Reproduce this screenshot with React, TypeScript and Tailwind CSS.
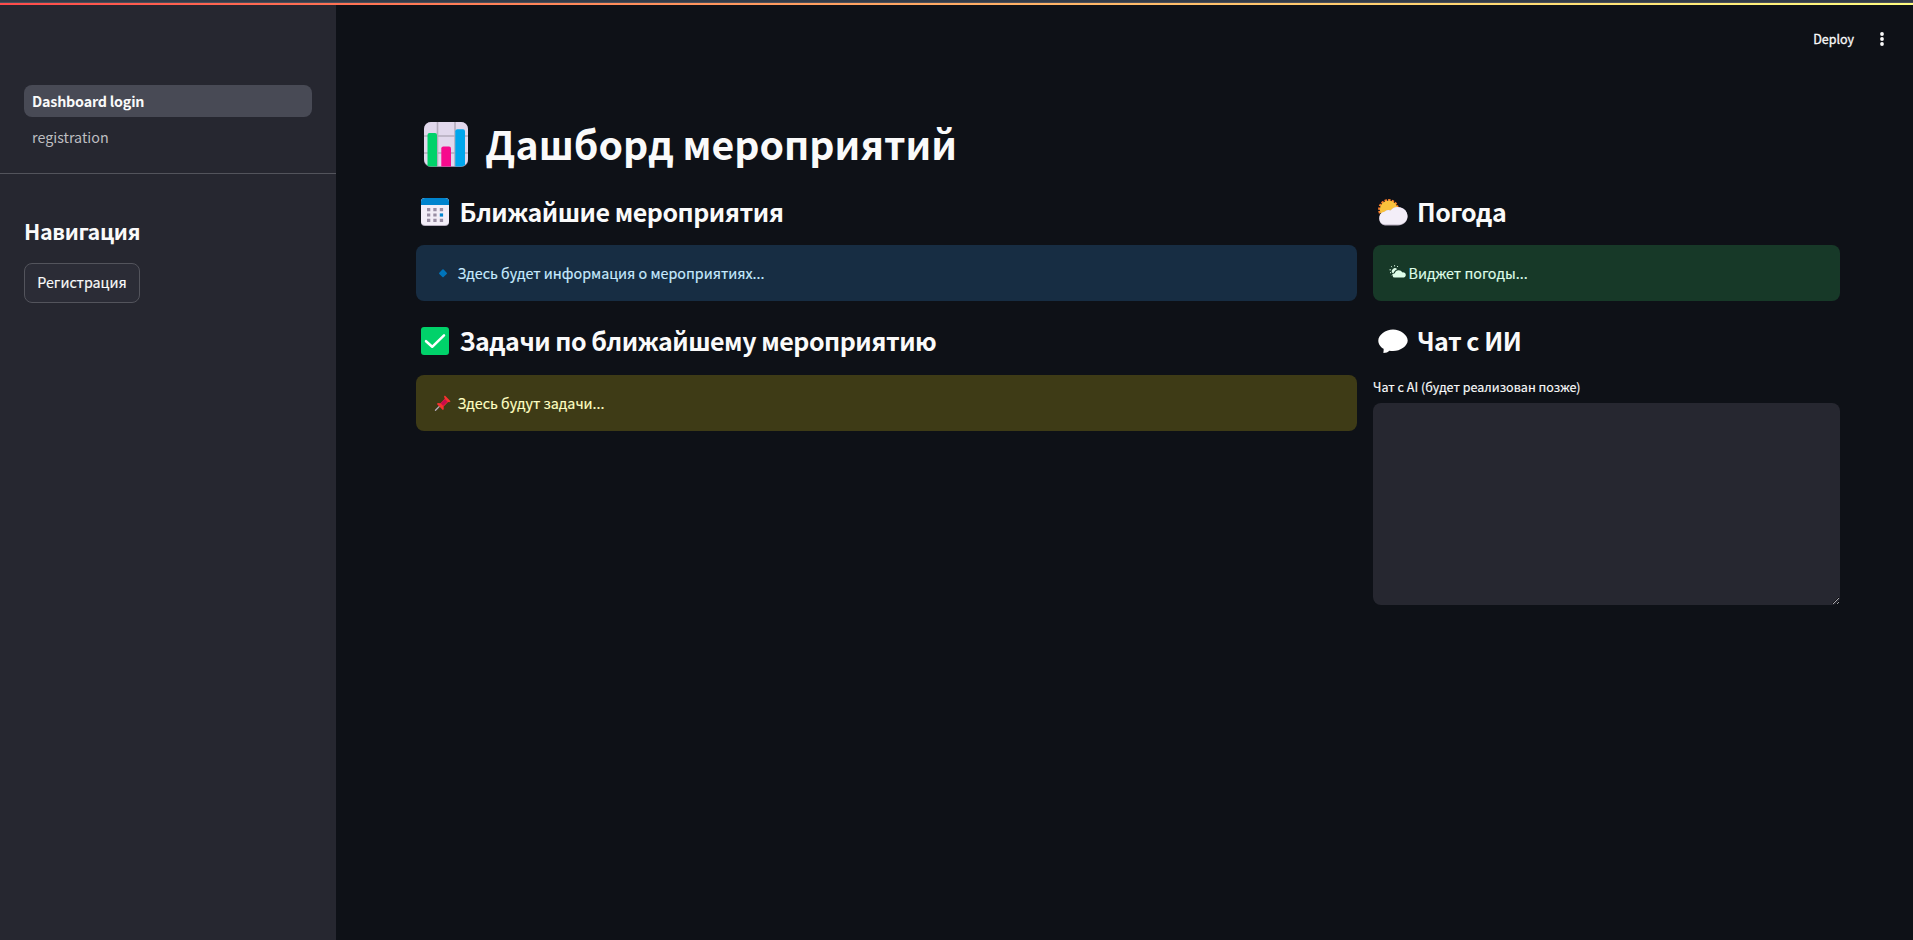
import type { ReactNode } from "react";

const ChartIcon = () => (
  <svg className="mt-[2px] ml-[8px] mr-[17.5px] h-[45px] w-[44px] shrink-0" viewBox="0 0 44 45">
    <rect width="44" height="45" rx="7" fill="#998ea4" />
    <rect width="44" height="44" rx="7" fill="#e1d8ec" />
    <path d="M13.5 0v44M31 0v44M0 14h44M0 31h44" stroke="#b4acbc" strokeWidth="1.6" />
    <path d="M3.5 44V13a2 2 0 0 1 2-2h5.5a2 2 0 0 1 2 2v31.5h-6z" fill="#00d26a" />
    <path d="M17.3 44.5V26.500a2 2 0 0 1 2-2h5.700a2 2 0 0 1 2 2v18z" fill="#f70a8d" />
    <path d="M31.3 44.5V9.300a2 2 0 0 1 2-2h5.700a2 2 0 0 1 2 2V43l-3 1.500z" fill="#00a6ed" />
  </svg>
);

const CalendarIcon = () => (
  <svg className="ml-[5px] mr-[10.5px] size-7 shrink-0" viewBox="0 0 28 28">
    <rect width="28" height="28" rx="4" fill="#b4acbc" />
    <rect width="28" height="27" rx="4" fill="#f3eef8" />
    <path d="M0 7V4a4 4 0 0 1 4-4h20a4 4 0 0 1 4 4v3z" fill="#0084ce" />
    <path d="M6 10h3.300v3.200H6zM12.300 10h3.300v3.200h-3.300zM18.800 10h3.300v3.200h-3.300zM6 15.400h3.300v3.200H6zM12.300 15.400h3.300v3.200h-3.300zM6 20.800h3.300V24H6zM12.300 20.800h3.300V24h-3.300zM18.800 20.800h3.300V24h-3.300z" fill="#998ea4" />
    <path d="M18.800 15.400h3.300v3.200h-3.300z" fill="#0084ce" />
  </svg>
);

const CheckIcon = () => (
  <svg className="ml-[5px] mr-[10.5px] size-7 shrink-0" viewBox="0 0 28 28">
    <rect width="28" height="28" rx="3" fill="#00d26a" />
    <path d="M5 14.200l6.200 5.600L23 8.400" fill="none" stroke="#fff" strokeWidth="2.5" strokeLinecap="round" strokeLinejoin="round" />
  </svg>
);

const SunCloudIcon = () => (
  <svg className="ml-[5px] mr-[9px] h-[28px] w-[30px] shrink-0" viewBox="0 0 30 28">
    <circle cx="10.5" cy="11.5" r="9.3" fill="none" stroke="#ff822d" strokeWidth="2.2" strokeDasharray="2.4 1.2" />
    <circle cx="10.7" cy="11.5" r="8.9" fill="#f9c23c" />
    <path d="M7 27.500a7 7 0 0 1-.5-13.700A5.500 5.500 0 0 1 12.500 12.500a9.700 9.700 0 0 1 17 6c0 5.500-4.500 9-9.500 9z" fill="#b4acbc" />
    <path d="M7 26.600a6.500 6.500 0 0 1-.5-12.800A5.500 5.500 0 0 1 12.500 12.500a9.700 9.700 0 0 1 17 5.500c0 5-4.500 8.600-9.500 8.600z" fill="#f3eef8" />
  </svg>
);

const BubbleIcon = () => (
  <svg className="ml-[5px] mr-[9px] h-[28px] w-[30px] shrink-0" viewBox="0 0 30 28">
    <path d="M15 2.500C7.500 2.500.3 8.300.3 13.500c0 4 2.500 6.800 5.300 8.300.2 1.700-.2 3-.2 4.200 2.800 0 4.400-.8 5.900-2.200 1.100.2 2.500.3 3.700.3 7.500 0 14.700-5.400 14.700-10.600S22.500 2.500 15 2.500z" fill="#fff" />
  </svg>
);

const DiamondIcon = () => (
  <svg className="mr-[5.5px] h-4 w-[20px] shrink-0" viewBox="0 0 20 16">
    <path d="M7.300 8.900a.8.800 0 0 1 0-1.200l3.100-3.100a.8.800 0 0 1 1.200 0l3.100 3.100a.8.800 0 0 1 0 1.200l-3.100 3.100a.8.800 0 0 1-1.200 0z" fill="#0074ba" />
  </svg>
);

const PinIcon = () => (
  <svg className="mr-[5.5px] h-4 w-[20px] shrink-0" viewBox="0 0 20 16">
    <path d="M3.500 15.300L9.100 9.600" stroke="#b4acbc" strokeWidth="1.3" strokeLinecap="round" />
    <path d="M12.900.500l5.700 5.700-1.300 1-1.200-.2-4.500 4.500.2 2.700-1 .8L4.900 9.100l.9-1 2.600.2 4.400-4.500-.8-2.200z" fill="#f8312f" />
    <path d="M13 4l2.600 2.800-4.400 4.200L8.600 8.300z" fill="#ca0b4a" />
  </svg>
);

const CloudGlyph = () => (
  <svg className="mr-[2.5px] h-4 w-[17px] shrink-0" viewBox="0 0 17 16" fill="#dffde9">
    <path d="M5.800 12.600a2.200 2.200 0 0 1 0-4.400c.5-2 2-3 3.800-3 1.700 0 3 .8 3.600 2.200 2.100-.3 3.600.9 3.600 2.600s-1.300 2.600-3.300 2.600z" />
    <path d="M3.600 8.200A2.600 2.600 0 1 1 8.200 4.300C6.300 4.900 5.300 6.300 4.900 7.500z" />
    <path d="M5.600.200v1.200M2.200 1.300l.9.900M.500 4.800h1.400M8.900 1.100l-.8.900M1 8l1.200-.7M3 10.400l.6-1" stroke="#dffde9" strokeWidth="1" />
  </svg>
);

const SectionTitle = ({ icon, children }: { icon: ReactNode; children: ReactNode }) => (
  <h3 className="flex h-[65px] items-center pb-[2px] text-[25px] font-bold tracking-[-0.48px] whitespace-nowrap">
    {icon}
    <span>{children}</span>
  </h3>
);

export default function App() {
  return (
    <div className="flex h-[940px] w-[1913px] flex-col overflow-hidden bg-[#0e1117] font-['Noto_Sans_CJK_SC','Noto_Sans',sans-serif] text-[14.3px] text-[#fafafa]">
      <div className="h-[3px] shrink-0 border-b border-[#4a4f5a] bg-[#323b48]" />
      <div className="h-[2px] shrink-0 bg-linear-to-r from-[#ff4b4b] to-[#fffd80]" />
      <div className="flex min-h-0 flex-1">
        <aside className="w-[336px] shrink-0 bg-[#262730]">
          <nav className="flex h-[169px] flex-col gap-1 border-b border-[#53545c] px-6 pt-20">
            <a className="flex h-8 items-center rounded-lg bg-[#484a55] px-2 font-bold tracking-[-0.2px]"><span>Dashboard login</span></a>
            <a className="flex h-8 items-center rounded-lg px-2 text-[#bebec1]"><span>registration</span></a>
          </nav>
          <div className="px-6 pt-[39px]">
            <h2 className="flex h-[36px] items-center text-[21.5px] font-bold tracking-[-0.35px]"><span>Навигация</span></h2>
            <button className="mt-[14px] flex h-10 w-[116px] items-center justify-center rounded-lg border border-[#53545c] bg-[#2b2c36] pb-[2px] [-webkit-text-stroke:0.15px]"><span>Регистрация</span></button>
          </div>
        </aside>
        <main className="flex-1">
          <header className="flex h-[68px] items-center justify-end gap-[21px] pr-[24px] text-[12.5px]">
            <span className="[-webkit-text-stroke:0.3px]">Deploy</span>
            <svg className="h-[16px] w-[14px]" viewBox="0 0 14 16" fill="#fafafa">
              <circle cx="7" cy="3" r="1.9" /><circle cx="7" cy="8" r="1.9" /><circle cx="7" cy="13" r="1.9" />
            </svg>
          </header>
          <div className="pl-20 pt-[38px]">
            <h1 className="flex h-[69px] items-center pb-[4px] text-[39.2px] font-bold whitespace-nowrap">
              <ChartIcon />
              <span>Дашборд мероприятий</span>
            </h1>
            <div className="grid grid-cols-[941px_467px] gap-4">
              <section>
                <SectionTitle icon={<CalendarIcon />}>Ближайшие мероприятия</SectionTitle>
                <div className="flex h-14 items-center rounded-lg bg-[#172d43] pl-4 text-[#c7ebff]">
                  <DiamondIcon /><span className="[-webkit-text-stroke:0.15px]">Здесь будет информация о мероприятиях...</span>
                </div>
                <div className="pt-[8px] pb-px">
                  <SectionTitle icon={<CheckIcon />}>Задачи по ближайшему мероприятию</SectionTitle>
                </div>
                <div className="flex h-14 items-center rounded-lg bg-[#3e3b16] pl-4 text-[#ffffc2]">
                  <PinIcon /><span className="[-webkit-text-stroke:0.15px]">Здесь будут задачи...</span>
                </div>
              </section>
              <section>
                <SectionTitle icon={<SunCloudIcon />}>Погода</SectionTitle>
                <div className="flex h-14 items-center rounded-lg bg-[#173928] pl-4 text-[#dffde9]">
                  <CloudGlyph /><span className="[-webkit-text-stroke:0.15px]">Виджет погоды...</span>
                </div>
                <div className="pt-[8px] pb-px">
                  <SectionTitle icon={<BubbleIcon />}>Чат с ИИ</SectionTitle>
                </div>
                <label className="flex h-[28px] items-center pb-[4px] text-[12.5px] tracking-[0.03px] [-webkit-text-stroke:0.15px]"><span>Чат с AI (будет реализован позже)</span></label>
                <textarea className="block h-[202px] w-full resize-y rounded-lg bg-[#262730] outline-none" />
              </section>
            </div>
          </div>
        </main>
      </div>
    </div>
  );
}
